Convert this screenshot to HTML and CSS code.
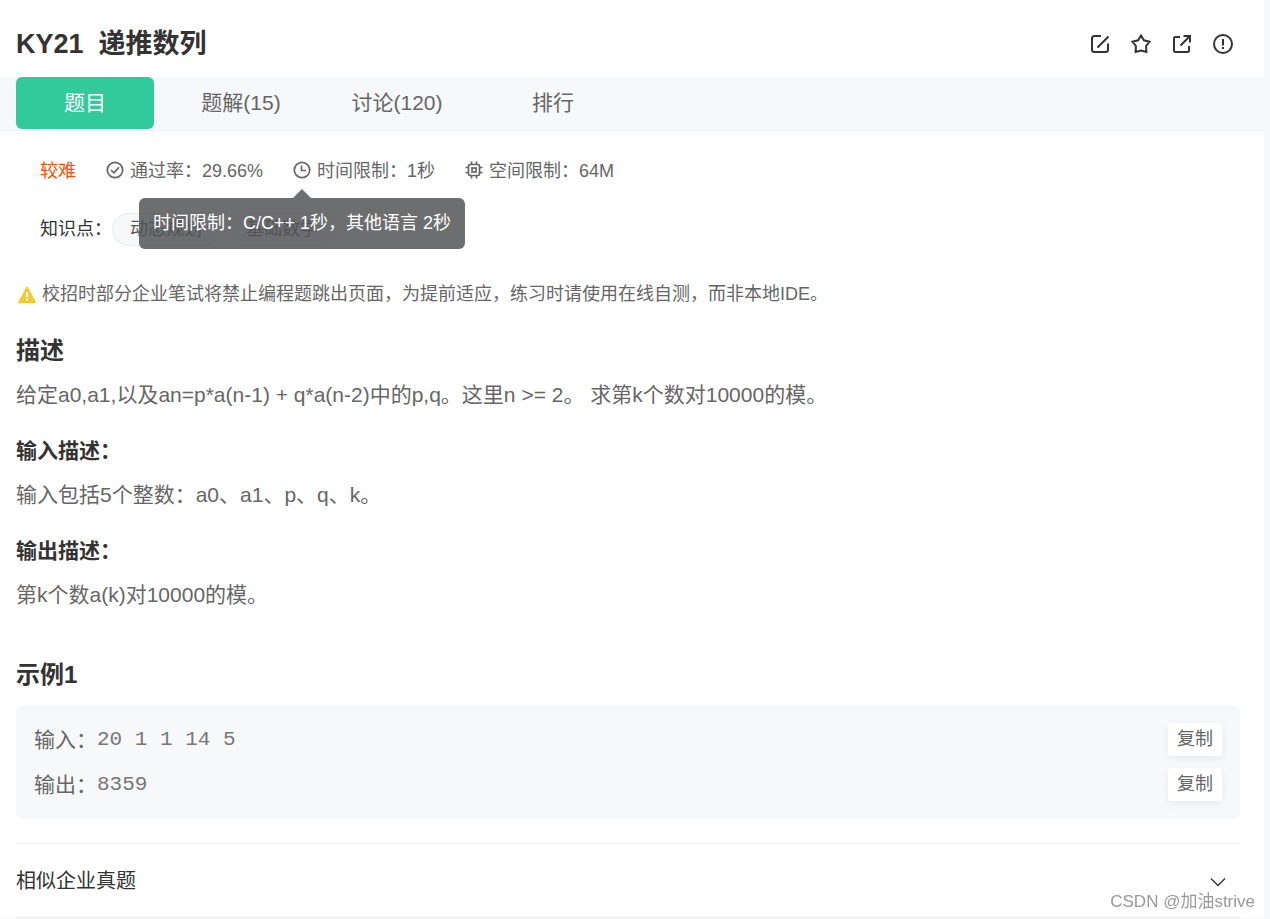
FILE: index.html
```html
<!DOCTYPE html>
<html lang="zh-CN">
<head>
    <meta charset="UTF-8">
    <meta name="viewport" content="width=device-width, initial-scale=1.0">
    <title>KY21 递推数列</title>
    <link rel="stylesheet" href="styles.css">
</head>
<body>
    <div class="page">
        <header class="header">
            <h1>KY21&nbsp; 递推数列</h1>
            <div class="actions">
                <button type="button" aria-label="笔记">
                    <svg width="20" height="20" viewBox="0 0 20 20"><path d="M11 2H4.500Q2 2 2 4.500V15.500Q2 18 4.500 18H15.500Q18 18 18 15.500V9.500M7.500 13.500L18.500 2.500"/></svg>
                </button>
                <button type="button" aria-label="收藏">
                    <svg width="20" height="20" viewBox="0 0 20 20"><path d="M10 1.500L12.900 6.300L18.500 7.700L15.100 12L15.400 18L10 16.500L4.600 18L4.900 12L1.500 7.700L7.100 6.300Z"/></svg>
                </button>
                <button type="button" aria-label="分享">
                    <svg width="20" height="20" viewBox="0 0 20 20"><path d="M8 3H3.500Q2 3 2 4.500V16.500Q2 18 3.500 18H15.500Q17 18 17 16.500V12M8.500 11.500L17.500 2.500M11.500 2H18V8.500"/></svg>
                </button>
                <button type="button" aria-label="反馈">
                    <svg width="20" height="20" viewBox="0 0 20 20"><circle cx="10" cy="10" r="9"/><path d="M10 5V11.500M10 13V15"/></svg>
                </button>
            </div>
        </header>

        <nav class="tabs">
            <a class="tab active" href="#question">题目</a>
            <a class="tab" href="#solution">题解(15)</a>
            <a class="tab" href="#discuss">讨论(120)</a>
            <a class="tab" href="#rank">排行</a>
        </nav>

        <main class="content" id="question">
            <div class="meta">
                <span class="level">较难</span>
                <span class="meta-item">
                    <svg width="18" height="18" viewBox="0 0 18 18"><circle cx="9" cy="9" r="7.700"/><path d="M5 9L8 11.800L13 6.300"/></svg>
                    通过率：29.66%
                </span>
                <span class="meta-item">
                    <span class="tip-anchor">
                        <svg width="18" height="18" viewBox="0 0 18 18"><circle cx="9" cy="9" r="7.700"/><path d="M8.500 4.500V9.500H13"/></svg>
                        <span class="tooltip" role="tooltip">时间限制：C/C++ 1秒，其他语言 2秒</span>
                    </span>
                    时间限制：1秒
                </span>
                <span class="meta-item">
                    <svg width="18" height="18" viewBox="0 0 18 18"><rect x="3.500" y="3.500" width="11" height="11" rx="1.500"/><rect x="7" y="7" width="4" height="4"/><path d="M6.500 3V.5M11.500 3V.5M6.500 15V17.500M11.500 15V17.500M3 6.500H.5M3 11.500H.5M15 6.500H17.500M15 11.500H17.500"/></svg>
                    空间限制：64M
                </span>
            </div>

            <div class="knowledge">
                <span>知识点：</span>
                <a class="tag" href="#dp">动态规划</a>
                <a class="tag" href="#math">基础数学</a>
            </div>

            <p class="warning">
                <svg width="20" height="18" viewBox="0 0 20 18"><path d="M11 1L19.300 16.500H2.700Z" fill="#f3ca30" stroke="#f3ca30" stroke-width="1.400" stroke-linejoin="round"/><path d="M11 6V11M11 12.500V14.500" stroke="#fff" stroke-width="2"/></svg>
                校招时部分企业笔试将禁止编程题跳出页面，为提前适应，练习时请使用在线自测，而非本地IDE。
            </p>

            <h2>描述</h2>
            <p>给定a0,a1,以及an=p*a(n-1) + q*a(n-2)中的p,q。这里n &gt;= 2。 求第k个数对10000的模。</p>
            <h3>输入描述：</h3>
            <p>输入包括5个整数：a0、a1、p、q、k。</p>
            <h3>输出描述：</h3>
            <p>第k个数a(k)对10000的模。</p>

            <h2 class="example-title">示例1</h2>
            <div class="example">
                <div class="example-row">
                    <span>输入：</span>
                    <code>20 1 1 14 5</code>
                    <button type="button" class="copy">复制</button>
                </div>
                <div class="example-row">
                    <span>输出：</span>
                    <code>8359</code>
                    <button type="button" class="copy">复制</button>
                </div>
            </div>

            <button type="button" class="similar">
                相似企业真题
                <svg width="16" height="10" viewBox="0 0 16 10"><path d="M1 1.500L8 8.500L15 1.500"/></svg>
            </button>
        </main>
    </div>
    <div class="watermark">CSDN @加油strive</div>
</body>
</html>
```
FILE: styles.css
```css
* {
    box-sizing: border-box;
}
body {
    margin: 0;
    padding-right: 6px;
    background: #f7f8fa;
    color: #333;
    font-family: "Liberation Sans", "Noto Sans CJK SC", sans-serif;
    font-size: 18px;
    line-height: 27px;
}
.page {
    background: #fff;
}
h1, h2, h3, p {
    margin: 0;
}
button {
    font: inherit;
    color: inherit;
    border: none;
    background: none;
    padding: 0;
    cursor: pointer;
}
a {
    color: inherit;
    text-decoration: none;
}
svg {
    display: block;
    flex: none;
    fill: none;
    stroke: currentColor;
    stroke-width: 2;
}
.header {
    display: flex;
    align-items: center;
    justify-content: space-between;
    padding: 24px 31px 13px 16px;
}
h1 {
    font-size: 27px;
    line-height: 40px;
}
.actions {
    display: flex;
    gap: 21px;
}
.tabs {
    display: flex;
    gap: 18px;
    padding: 0 16px 1px;
    background: #f7f8fa;
    border-bottom: 1px solid #f0f1f3;
}
.tab {
    width: 138px;
    border-radius: 6px;
    font-size: 21px;
    line-height: 52px;
    text-align: center;
    color: #666;
}
.tab.active {
    background: #32ca99;
    color: #fff;
}
.content {
    padding: 27px 24px 0 16px;
}
.meta {
    display: flex;
    align-items: center;
    gap: 30px;
    padding-left: 24px;
    color: #666;
}
.level {
    color: #ff4d00;
}
.meta-item {
    display: flex;
    align-items: center;
    gap: 6px;
}
.meta svg {
    margin-bottom: 4px;
    stroke-width: 1.7;
}
.tip-anchor {
    position: relative;
}
.tooltip {
    position: absolute;
    top: 37px;
    left: 50%;
    transform: translateX(-50%);
    padding: 12px 14px;
    border-radius: 6px;
    background: rgba(84, 85, 87, 0.85);
    color: #fff;
    white-space: nowrap;
}
.tooltip::before {
    content: "";
    position: absolute;
    bottom: 100%;
    left: 50%;
    margin-left: -9px;
    border: 9px solid transparent;
    border-top: none;
    border-bottom-color: #6e6f71;
}
.knowledge {
    display: flex;
    align-items: center;
    padding: 28px 24px 35px;
}
.tag {
    margin-right: 8px;
    padding: 2px 17px;
    border: 1px solid #e6e9ed;
    border-radius: 17px;
    background: #f7f8fa;
    color: #555;
}
.content .warning {
    display: flex;
    align-items: center;
    gap: 6px;
    margin-bottom: 25px;
    font-size: 18px;
    line-height: 27px;
}
h2 {
    margin-bottom: 8px;
    font-size: 24px;
    line-height: 36px;
}
h3 {
    margin: 20px 0 8px;
    font-size: 21px;
    line-height: 36px;
}
.content p {
    color: #666;
}
.content h2 ~ p {
    font-size: 21px;
    line-height: 36px;
}
.example-title {
    margin: 44px 0 12px;
}
.example {
    display: flex;
    flex-direction: column;
    gap: 12px;
    padding: 18px;
    border-radius: 6px;
    background: #f7f8fa;
    color: #666;
}
.example-row {
    display: flex;
    align-items: center;
    font-size: 21px;
}
code {
    color: #777;
    font-family: "Liberation Mono", monospace;
}
.copy {
    margin-left: auto;
    padding: 3px 9px;
    border-radius: 3px;
    background: #fff;
    box-shadow: 0 3px 9px rgba(0, 0, 0, 0.06);
    font-size: 18px;
}
.similar {
    display: flex;
    align-items: center;
    justify-content: space-between;
    width: 100%;
    height: 75px;
    margin-top: 24px;
    padding: 2px 14px 0 0;
    border: solid #eceef1;
    border-width: 1px 0;
    font-size: 20px;
}
.similar svg {
    stroke-width: 1.4;
}
.watermark {
    position: fixed;
    right: 15px;
    bottom: 4px;
    color: #999;
    font-size: 17px;
}
```
